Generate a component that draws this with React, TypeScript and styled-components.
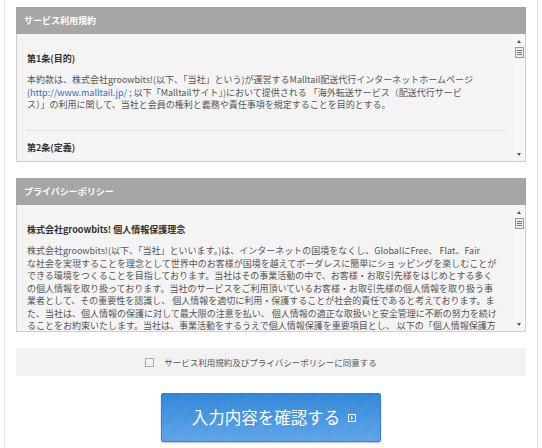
import * as React from "react";
import styled, { createGlobalStyle } from "styled-components";

const GlobalStyle = createGlobalStyle`
  html, body {
    margin: 0;
    padding: 0;
    background: #ffffff;
    overflow: hidden;
  }
  body {
    font-family: "Noto Sans CJK JP", sans-serif;
    color: #444;
  }
`;

const Frame = styled.div`
  box-sizing: border-box;
  width: 534px;
  margin-left: 4px;
  min-height: 100vh;
  border-left: 1px solid #e4e4e4;
  border-right: 1px solid #e4e4e4;
  padding: 7px 11px 0 11px;
  display: flex;
  flex-direction: column;
`;

const Panel = styled.section<{ $gap?: number }>`
  margin-bottom: ${(p) => p.$gap ?? 16}px;
`;

const PanelHeader = styled.div`
  height: 27px;
  background: #a6a6a6;
  color: #ffffff;
  font-weight: bold;
  font-size: 9px;
  display: flex;
  align-items: center;
  padding-left: 8px;
`;

const PanelBody = styled.div<{ $height: number }>`
  height: ${(p) => p.$height}px;
  border: 1px solid #cfcfcf;
  border-top: none;
  background: #f4f4f4;
  display: flex;
`;

const ScrollContent = styled.div`
  flex: 1;
  overflow: hidden;
  padding: 18px 8px 0 10px;
`;

const ArticleTitle = styled.h3`
  margin: 0 0 8px 0;
  font-size: 9px;
  line-height: 14px;
  font-weight: bold;
  color: #333;
`;

const Paragraph = styled.p`
  margin: 0;
  font-size: 9px;
  line-height: 12.5px;
  color: #555;
  white-space: nowrap;
  a {
    color: #2a72c8;
    text-decoration: none;
  }
`;

const Divider = styled.hr`
  border: none;
  border-top: 1px dotted #cfcfcf;
  margin: 18px 0 10px 0;
`;

const ScrollBar = styled.div`
  width: 12px;
  display: flex;
  flex-direction: column;
  align-items: center;
  justify-content: space-between;
  padding: 6px 0 5px 0;
  background: #f6f6f6;
`;

const Arrow = styled.span<{ $down?: boolean }>`
  width: 0;
  height: 0;
  border-left: 2.5px solid transparent;
  border-right: 2.5px solid transparent;
  ${(p) =>
    p.$down
      ? "border-top: 3px solid #555;"
      : "border-bottom: 3px solid #555;"}
`;

const Track = styled.div`
  flex: 1;
  width: 100%;
  display: flex;
  justify-content: center;
  padding-top: 4px;
`;

const Thumb = styled.div`
  box-sizing: border-box;
  width: 9px;
  height: 11px;
  border: 1px solid #9a9a9a;
  background: #ececec;
  display: flex;
  flex-direction: column;
  justify-content: center;
  align-items: center;
  gap: 1px;
  span {
    display: block;
    width: 5px;
    height: 1px;
    background: #777;
  }
`;

const AgreeBar = styled.label`
  height: 28px;
  background: #f2f2f2;
  display: flex;
  align-items: center;
  justify-content: center;
  gap: 10px;
  font-size: 8.5px;
  color: #555;
  margin-bottom: 17px;
  padding-right: 20px;
`;

const CheckBox = styled.span`
  box-sizing: border-box;
  width: 9px;
  height: 9px;
  border: 1px solid #a9a9a9;
  background: linear-gradient(#ffffff, #e6e6e6);
  box-shadow: inset 0 0 0 1px #f4f4f4;
`;

const ButtonRow = styled.div`
  display: flex;
  justify-content: center;
`;

const SubmitButton = styled.button`
  box-sizing: border-box;
  width: 220px;
  height: 49px;
  border: 1px solid #3b7ec6;
  border-radius: 2px;
  background:
    repeating-linear-gradient(
      -45deg,
      rgba(255, 255, 255, 0.05) 0px,
      rgba(255, 255, 255, 0.05) 1px,
      transparent 1px,
      transparent 3px
    ),
    linear-gradient(#3186d9, #5ea4e8);
  box-shadow: 0 1px 2px rgba(0, 0, 0, 0.25);
  color: #ffffff;
  font-family: "Noto Sans CJK JP", sans-serif;
  font-size: 16.5px;
  display: flex;
  align-items: center;
  justify-content: center;
  gap: 8px;
  padding: 0 0 1px 6px;
  cursor: pointer;
`;

const NextIcon = styled.span`
  box-sizing: border-box;
  width: 8px;
  height: 8px;
  border: 1px solid rgba(255, 255, 255, 0.9);
  display: flex;
  align-items: center;
  justify-content: center;
  margin-top: 2px;
  &::after {
    content: "";
    border-top: 2px solid transparent;
    border-bottom: 2px solid transparent;
    border-left: 2px solid #ffffff;
  }
`;

function FakeScrollBar() {
  return (
    <ScrollBar>
      <Arrow />
      <Track>
        <Thumb>
          <span />
          <span />
          <span />
        </Thumb>
      </Track>
      <Arrow $down />
    </ScrollBar>
  );
}

const privacyLines = [
  "株式会社groowbits!(以下、「当社」といいます。)は、インターネットの国境をなくし、GlobalにFree、 Flat、Fair",
  "な社会を実現することを理念として世界中のお客様が国境を越えてボーダレスに簡単にショ ッピングを楽しむことが",
  "できる環境をつくることを目指しております。当社はその事業活動の中で、お客様・お取引先様をはじめとする多く",
  "の個人情報を取り扱っております。当社のサービスをご利用頂いているお客様・お取引先様の個人情報を取り扱う事",
  "業者として、その重要性を認識し、 個人情報を適切に利用・保護することが社会的責任であると考えております。ま",
  "た、当社は、個人情報の保護に対して最大限の注意を払い、 個人情報の適正な取扱いと安全管理に不断の努力を続け",
  "ることをお約束いたします。当社は、事業活動をするうえで個人情報保護を重要項目とし、 以下の「個人情報保護方",
  "針」を定め、全従業員がこれを遵守することを宣言いたします。",
];

export default function App() {
  return (
    <>
      <GlobalStyle />
      <Frame>
        <Panel>
          <PanelHeader>サービス利用規約</PanelHeader>
          <PanelBody $height={127}>
            <ScrollContent>
              <ArticleTitle>第1条(目的)</ArticleTitle>
              <Paragraph>
                本約款は、株式会社groowbits!(以下、「当社」という)が運営するMalltail配送代行インターネットホームページ
                <br />
                (<a href="#">http://www.malltail.jp/</a> ; 以下「Malltailサイト」)において提供される 「海外転送サービス（配送代行サービ
                <br />
                ス）」の利用に関して、当社と会員の権利と義務や責任事項を規定することを目的とする。
              </Paragraph>
              <Divider />
              <ArticleTitle>第2条(定義)</ArticleTitle>
            </ScrollContent>
            <FakeScrollBar />
          </PanelBody>
        </Panel>

        <Panel $gap={16}>
          <PanelHeader>プライバシーポリシー</PanelHeader>
          <PanelBody $height={126}>
            <ScrollContent>
              <ArticleTitle>株式会社groowbits! 個人情報保護理念</ArticleTitle>
              <Paragraph>
                {privacyLines.map((line, i) => (
                  <React.Fragment key={i}>
                    {line}
                    {i < privacyLines.length - 1 && <br />}
                  </React.Fragment>
                ))}
              </Paragraph>
            </ScrollContent>
            <FakeScrollBar />
          </PanelBody>
        </Panel>

        <AgreeBar>
          <CheckBox />
          サービス利用規約及びプライバシーポリシーに同意する
        </AgreeBar>

        <ButtonRow>
          <SubmitButton type="button">
            入力内容を確認する
            <NextIcon />
          </SubmitButton>
        </ButtonRow>
      </Frame>
    </>
  );
}
